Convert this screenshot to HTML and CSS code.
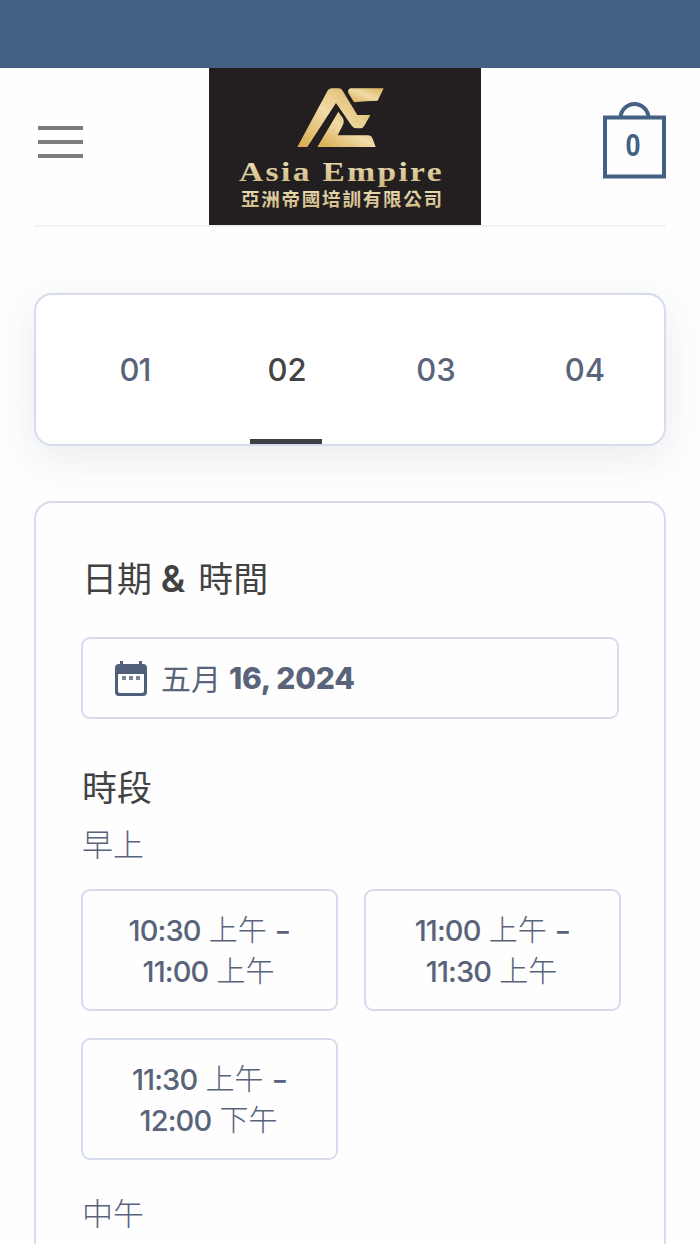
FILE: index.html
```html
<!DOCTYPE html>
<html lang="zh-Hant">
    <head>
        <meta charset="utf-8">
        <title>Asia Empire</title>
        <link rel="stylesheet" href="styles.css">
    </head>
    <body>
        <div class="topbar"></div>
        <header class="header">
            <button class="menu" aria-label="Menu"><span></span><span></span><span></span></button>
            <a class="logo">
                <svg width="272" height="157" viewBox="0 0 272 157">
                    <defs>
                        <linearGradient id="gold" x1="0" y1="1" x2="1" y2="0">
                            <stop offset="0" stop-color="#d6a84a"/>
                            <stop offset="0.5" stop-color="#f0dba6"/>
                            <stop offset="1" stop-color="#d9b25c"/>
                        </linearGradient>
                        <linearGradient id="goldText" x1="0" y1="0" x2="0" y2="1">
                            <stop offset="0" stop-color="#f0e4bc"/>
                            <stop offset="1" stop-color="#cdb580"/>
                        </linearGradient>
                    </defs>
                    <g transform="translate(81 12) scale(0.3333)" fill="url(#gold)">
                        <path d="M22 201L111 35Q117 25 126 25H146Q154 25 158 32L202 105H241L223 137Q219 145 210 145H200Q191 145 185 137L138 69L52 201Z"/>
                        <path d="M181 25H281L263 62Q225 62 192 67L175 39Q172 29 181 25Z"/>
                        <path d="M145 95L158 113Q164 124 159 134L143 166H234Q244 166 248 176L257 201H82Z"/>
                    </g>
                    <text class="logo-name" x="30" y="113" textLength="205" lengthAdjust="spacingAndGlyphs" fill="url(#goldText)">Asia Empire</text>
                    <text class="logo-sub" x="32" y="138" textLength="201" fill="url(#goldText)">亞洲帝國培訓有限公司</text>
                </svg>
            </a>
            <a class="cart">
                <svg width="63" height="77" viewBox="0 0 63 77" fill="none" stroke="#446084" stroke-width="4">
                    <path d="M17.5 16A14 14 0 0 1 45.500 16"/>
                    <rect x="2" y="15.500" width="59" height="59"/>
                    <text class="cart-count" x="30" y="54" text-anchor="middle" textLength="15" lengthAdjust="spacingAndGlyphs">0</text>
                </svg>
            </a>
        </header>

        <nav class="steps">
            <div class="step"><span>01</span></div>
            <div class="step active"><span>02</span></div>
            <div class="step"><span>03</span></div>
            <div class="step"><span>04</span></div>
        </nav>

        <main class="panel">
            <h2>日期 <b>&amp;</b> 時間</h2>
            <div class="date">
                <svg width="32" height="35" viewBox="0 0 32 35">
                    <path fill="#525f7a" fill-rule="evenodd" d="M5 0H8V3H24V0H27V3H28Q32 3 32 7V31Q32 35 28 35H4Q0 35 0 31V7Q0 3 4 3H5ZM3 13V30Q3 32 5 32H27Q29 32 29 30V13Z"/>
                    <path fill="#7b859b" d="M7 15h4v4H7zM14 15h4v4h-4zM21 15h4v4h-4z"/>
                </svg>
                <span>五月</span><b>16, 2024</b>
            </div>

            <h2>時段</h2>
            <h3>早上</h3>
            <div class="slots">
                <div class="slot"><p><b>10:30</b> 上午 <b>-</b></p><p><b>11:00</b> 上午</p></div>
                <div class="slot"><p><b>11:00</b> 上午 <b>-</b></p><p><b>11:30</b> 上午</p></div>
                <div class="slot"><p><b>11:30</b> 上午 <b>-</b></p><p><b>12:00</b> 下午</p></div>
            </div>
            <h3>中午</h3>
        </main>
    </body>
</html>
```
FILE: styles.css
```css
* {
    box-sizing: border-box;
}
body {
    margin: 0;
    height: 1244px;
    overflow: hidden;
    background-color: #fefefe;
    font-family: Inter, "Noto Sans CJK TC", sans-serif;
    color: #59647b;
}
.topbar {
    height: 68px;
    background-color: #446084;
}
.header {
    display: flex;
    justify-content: space-between;
    align-items: center;
    height: 159px;
    margin: 0 34px;
    border-bottom: 2px solid #f2f2f2;
}
.menu {
    display: flex;
    flex-direction: column;
    gap: 10px;
    width: 45px;
    margin: -9px 0 0 4px;
    padding: 0;
    border: none;
    background: none;
}
.menu span {
    height: 4px;
    background-color: #7d7d7d;
}
.logo {
    height: 157px;
    margin-left: 13px;
    margin-right: 9px;
    background-color: #231f20;
}
.logo svg, .cart svg {
    display: block;
}
.logo-name {
    font: bold 28px "Liberation Serif", serif;
    letter-spacing: 2px;
}
.logo-sub {
    font: bold 18.5px "Noto Sans CJK TC", sans-serif;
}
.cart {
    margin-top: -13px;
}
.cart-count {
    font: bold 31px "Liberation Sans", sans-serif;
    fill: #446084;
    stroke: none;
}
.steps {
    display: flex;
    height: 153px;
    margin: 66px 34px 0;
    padding-left: 26px;
    border: 2px solid #d6dcee;
    border-radius: 18px;
    background-color: white;
    box-shadow: 0 12px 42px rgba(50, 65, 100, 0.1);
}
.step {
    display: flex;
    justify-content: center;
    width: 149px;
    flex-shrink: 0;
    font-size: 31px;
    font-weight: 500;
    line-height: 149px;
}
.step span {
    width: 72px;
    padding-left: 3px;
    text-align: center;
}
.step:first-child span {
    padding: 0 3px 0 0;
    letter-spacing: -1px;
}
.active span {
    color: #454545;
    border-bottom: 5px solid #3d4042;
}
.panel {
    height: 800px;
    margin: 55px 34px 0;
    padding: 48px 43px 0 45px;
    border: 2px solid #d6dcee;
    border-radius: 18px;
}
h2 {
    margin: 0;
    padding-left: 1px;
    font-size: 35px;
    font-weight: 400;
    line-height: 56px;
    color: #424242;
}
h2 b {
    margin: 0 3px 0 -1px;
    font-size: 37px;
    font-weight: 600;
}
.date {
    display: flex;
    align-items: center;
    height: 82px;
    margin: 30px 2px 41px 0;
    padding-left: 32px;
    border: 2px solid #d6dcee;
    border-radius: 9px;
    font-size: 30px;
}
.date span {
    margin: -3px 8px 0 14px;
}
.date b {
    font-weight: 800;
    letter-spacing: -0.2px;
}
h3 {
    margin: 0;
    padding: 1px 0 0 1px;
    font-size: 31px;
    font-weight: 300;
    line-height: 56px;
}
.slots {
    display: grid;
    grid-template-columns: 257px 257px;
    gap: 27px 26px;
    margin: 16px 0 25px;
}
.slot {
    height: 122px;
    padding: 19px 2px 0 0;
    border: 2px solid #d6dcee;
    border-radius: 9px;
    font-size: 29px;
    font-weight: 300;
    line-height: 41px;
    text-align: center;
}
.slot p {
    margin: 0;
}
.slot b {
    font-weight: 500;
    letter-spacing: -0.9px;
}
.slot b + b {
    display: inline-block;
    margin-left: 1px;
    transform: scaleX(1.25);
}
```
